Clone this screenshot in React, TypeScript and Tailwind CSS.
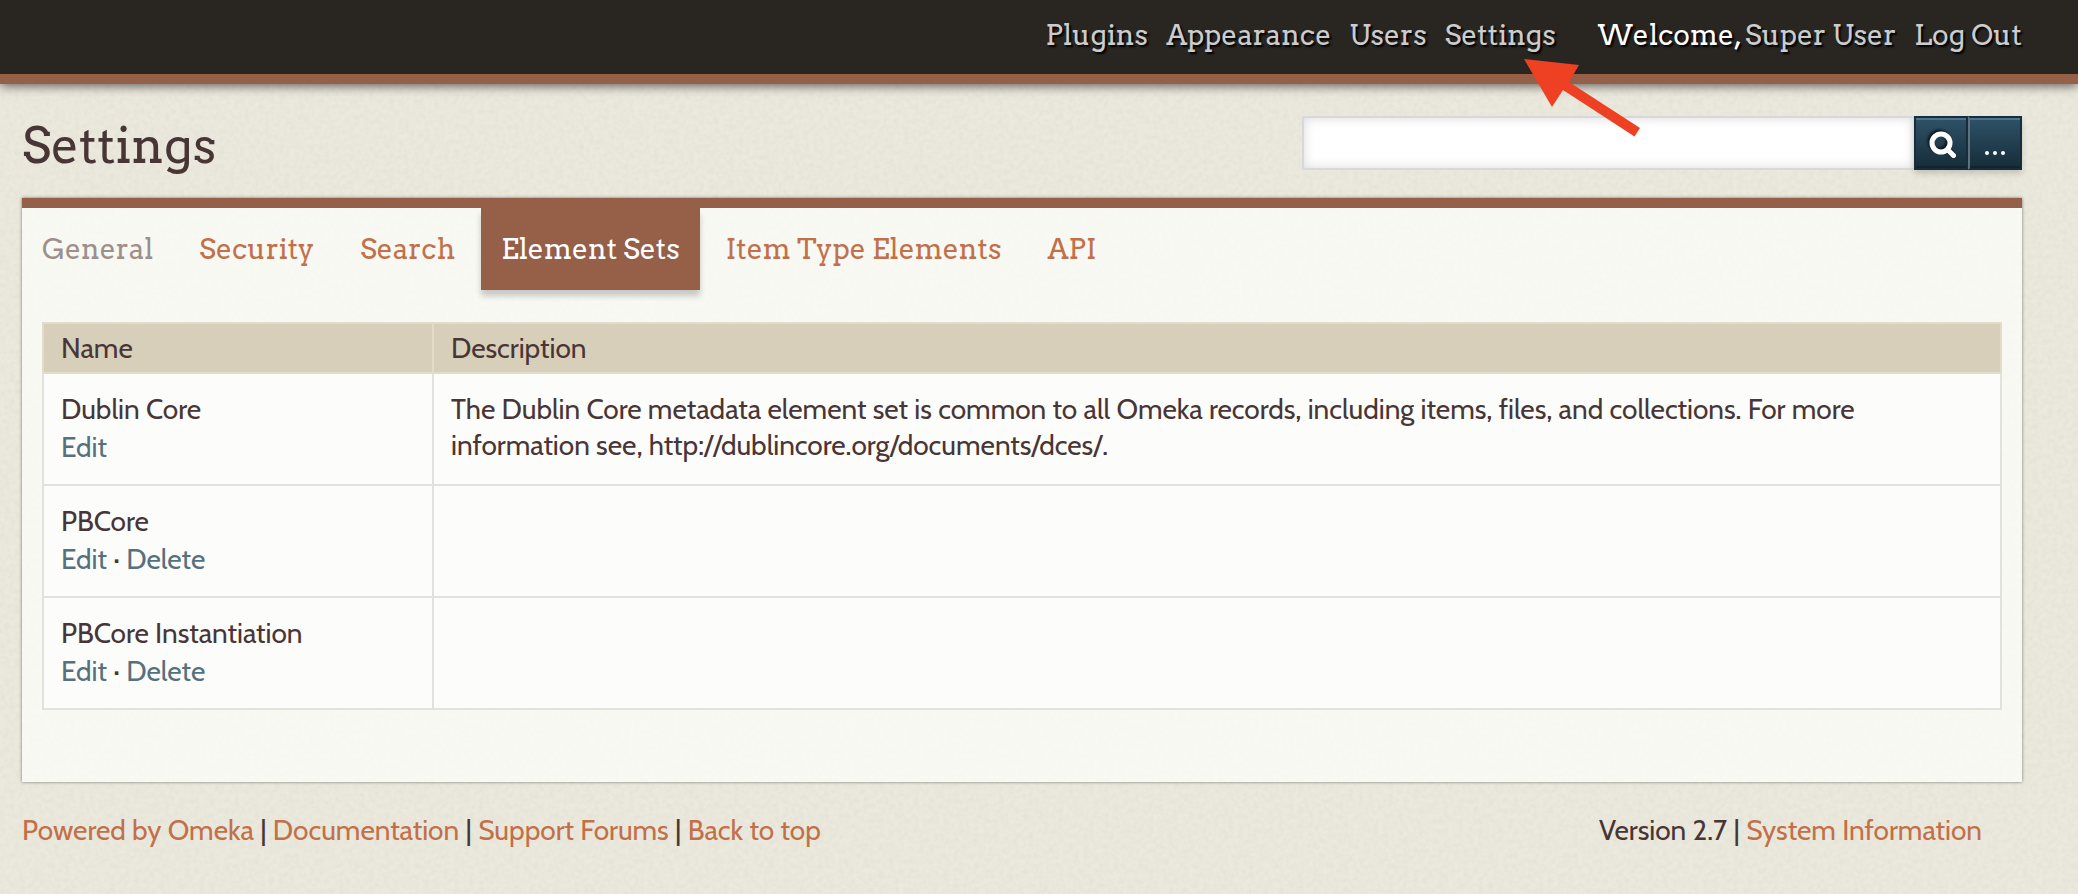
import React from "react";

const slab = "font-['Arvo','DejaVu_Serif_Condensed','DejaVu_Serif',serif]";

const adminLinks = ["Plugins", "Appearance", "Users", "Settings"];

const tabs = [
  { label: "General", visited: true },
  { label: "Security" },
  { label: "Search" },
  { label: "Element Sets", current: true },
  { label: "Item Type Elements" },
  { label: "API" },
];

const elementSets = [
  {
    name: "Dublin Core",
    actions: ["Edit"],
    description:
      "The Dublin Core metadata element set is common to all Omeka records, including items, files, and collections. For more information see, http://dublincore.org/documents/dces/.",
  },
  { name: "PBCore", actions: ["Edit", "Delete"], description: "" },
  { name: "PBCore Instantiation", actions: ["Edit", "Delete"], description: "" },
];

const footerLinks = ["Powered by Omeka", "Documentation", "Support Forums", "Back to top"];

function PaperTexture() {
  return (
    <svg className="pointer-events-none absolute inset-0 -z-10 h-full w-full" aria-hidden="true">
      <filter id="paper" x="0" y="0" width="100%" height="100%">
        <feTurbulence type="fractalNoise" baseFrequency="0.2" numOctaves="3" seed="4" stitchTiles="stitch" />
        <feColorMatrix values="0 0 0 0 0.6  0 0 0 0 0.58  0 0 0 0 0.48  0.36 0 0 0 -0.12" />
      </filter>
      <rect width="100%" height="100%" filter="url(#paper)" />
    </svg>
  );
}

function Arrow() {
  return (
    <svg
      className="pointer-events-none absolute top-[59px] right-[438px] h-[78px] w-[116px]"
      viewBox="0 0 116 78"
      aria-hidden="true"
    >
      <polygon points="0,0 55,6 45,23 116,69 110.500,77.500 39,31 28,48" fill="#ee4023" />
    </svg>
  );
}

function Header() {
  return (
    <header className="border-b-10 border-[#965f47] bg-[#292622] shadow-[0_2px_10px_rgba(0,0,0,0.6)]">
      <div
        className={`${slab} mr-14 flex h-[74px] items-center justify-end pb-1 text-[28px] leading-9 text-[#ccc] [text-shadow:2px_2px_2px_#000]`}
      >
        <nav className="flex gap-[18px]">
          {adminLinks.map((label) => (
            <a key={label} href="#">
              {label}
            </a>
          ))}
        </nav>
        <div className="ml-[42px] flex gap-[18px]">
          <p className="flex gap-[3px]">
            <span className="text-white">Welcome,</span>
            <a href="#">Super User</a>
          </p>
          <a href="#">Log Out</a>
        </div>
      </div>
    </header>
  );
}

function SearchForm() {
  const button =
    "flex h-[54px] items-center justify-center border-2 border-[#162d3c] bg-linear-to-b from-[#2e5369] to-[#172c39] text-white";
  return (
    <form
      role="search"
      className="flex w-[36%]"
      onSubmit={(event) => event.preventDefault()}
    >
      <input
        type="text"
        aria-label="Search"
        className="h-[54px] min-w-0 flex-1 border-2 border-r-0 border-[#d8d8d8] bg-white px-3 text-[26px] shadow-[inset_0_0_12px_rgba(0,0,0,0.15)] outline-none"
      />
      <div className="flex shadow-[0_4px_6px_rgba(0,0,0,0.15)]">
        <button
          type="submit"
          aria-label="Submit search"
          className={`${button} w-[54px] shadow-[inset_0_2px_0_#52718a,inset_0_-2px_0_#14212f]`}
        >
          <svg
            className="size-7 overflow-visible [filter:drop-shadow(-2px_-2px_1px_rgba(0,0,0,0.6))]"
            viewBox="0 0 28 28"
            aria-hidden="true"
          >
            <circle cx="14" cy="14" r="9" fill="none" stroke="#fff" strokeWidth="5" />
            <path d="M21 21 L26.500 26.500" stroke="#fff" strokeWidth="5" strokeLinecap="round" />
          </svg>
        </button>
        <button
          type="button"
          aria-label="Advanced search options"
          className={`${button} w-[54px] border-l-[#5f7280] shadow-[inset_0_2px_0_#52718a,inset_0_-2px_0_#14212f]`}
        >
          <svg className="mt-5 h-1 w-5" viewBox="0 0 20 4" aria-hidden="true">
            <circle cx="2" cy="2" r="2" fill="#fff" />
            <circle cx="10" cy="2" r="2" fill="#fff" />
            <circle cx="18" cy="2" r="2" fill="#fff" />
          </svg>
        </button>
      </div>
    </form>
  );
}

function Tabs() {
  return (
    <nav className={`${slab} flex gap-[6px] text-[28px] leading-10`}>
      {tabs.map(({ label, current, visited }) => (
        <a
          key={label}
          href="#"
          aria-current={current ? "page" : undefined}
          className={
            current
              ? "bg-[#965f47] px-5 pt-[21px] pb-[21px] text-white shadow-[0_6px_6px_rgba(0,0,0,0.2)]"
              : visited
                ? "px-5 pt-[21px] pb-[21px] text-[#9d8f8b]"
                : "px-5 pt-[21px] pb-[21px] text-[#c1704a]"
          }
        >
          {label}
        </a>
      ))}
    </nav>
  );
}

function ElementSetTable() {
  return (
    <table className="w-full border-collapse border-2 border-[#e2e2dc] text-left">
      <thead>
        <tr className="bg-[#d8cfba]">
          <th scope="col" className="w-[390px] border-2 border-[#e2dccb] px-[17px] py-[6px] font-normal leading-9">
            Name
          </th>
          <th scope="col" className="border-2 border-[#e2dccb] px-[17px] py-[6px] font-normal leading-9">
            Description
          </th>
        </tr>
      </thead>
      <tbody className="bg-white/60">
        {elementSets.map(({ name, actions, description }) => (
          <tr key={name} className="h-28 align-top">
            <td className="border-2 border-[#e2e2dc] px-[17px] pt-4 leading-[38px]">
              <p>{name}</p>
              <p>
                {actions.map((action, i) => (
                  <React.Fragment key={action}>
                    {i > 0 && " · "}
                    <a href="#" className="text-[#557180]">
                      {action}
                    </a>
                  </React.Fragment>
                ))}
              </p>
            </td>
            <td className="border-2 border-[#e2e2dc] px-[17px] pt-[17px] leading-9">{description}</td>
          </tr>
        ))}
      </tbody>
    </table>
  );
}

export default function App() {
  return (
    <div className="relative isolate min-h-screen bg-[#ebe9dd] font-['Cabin','Lato',sans-serif] text-[28px] text-[#483636]">
      <PaperTexture />
      <Header />
      <div className="mr-14 ml-[22px]">
        <div className="flex items-start justify-between pt-8">
          <h1 className={`${slab} text-[49px] leading-[60px]`}>Settings</h1>
          <SearchForm />
        </div>
        <main className="mt-[22px] border-t-10 border-[#965f47] bg-[#fbfcf9]/80 px-5 pb-[72px] shadow-[0_0_3px_rgba(0,0,0,0.5)]">
          <div className="-ml-5">
            <Tabs />
          </div>
          <div className="pt-8">
            <ElementSetTable />
          </div>
        </main>
        <footer className="flex justify-between pt-[30px] pr-10 leading-9">
          <p>
            {footerLinks.map((label, i) => (
              <React.Fragment key={label}>
                {i > 0 && " | "}
                <a href="#" className="text-[#c1704a]">
                  {label}
                </a>
              </React.Fragment>
            ))}
          </p>
          <p>
            Version 2.7 |{" "}
            <a href="#" className="text-[#c1704a]">
              System Information
            </a>
          </p>
        </footer>
      </div>
      <Arrow />
    </div>
  );
}
